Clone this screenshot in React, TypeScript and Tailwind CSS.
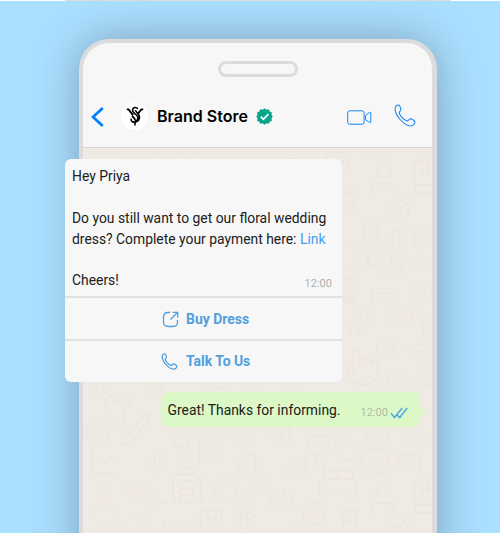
import React from "react";
import {
  User, BookMarked, LifeBuoy, Trash2, Smartphone, MessagesSquare, CreditCard, Clock3, Utensils, Wallet, HatGlasses,
  Pointer, PhoneCall, CupSoda, Square, Shirt, Disc, Slice, ChartLine, Mic, Lamp, Calculator, ShoppingCart,
  Briefcase, Backpack, Badge, AudioLines, ArrowLeft, ChefHat, Flower2, Gamepad2, Martini, Pencil, Gift, Cake,
  Tag, Banknote, Fuel, Smile, Mail, TriangleRight, BedDouble, HardHat, Globe, Sparkles, Ticket, Wifi, Scissors,
  Image, Pin, ToggleLeft, Box,
} from "lucide-react";

type Doodle = [React.ElementType, number, number, number, number];

const doodles: Doodle[] = [
  [BedDouble, 89, 146, 28, 10], [Scissors, 151, 146, 12, 12], [Disc, 174, 148, 26, 26],
  [TriangleRight, 281, 145, 18, 16], [Wallet, 323, 150, 28, 22], [Smile, 361, 132, 28, 25], [Mail, 397, 138, 23, 15],
  [User, 363, 160, 40, 38], [BookMarked, 409, 157, 28, 39], [LifeBuoy, 383, 197, 27, 27],
  [Trash2, 359, 217, 22, 27], [Smartphone, 387, 228, 22, 26], [MessagesSquare, 364, 250, 40, 27],
  [CreditCard, 369, 283, 28, 24], [Clock3, 407, 280, 26, 26], [CreditCard, 386, 304, 28, 24],
  [Utensils, 418, 314, 16, 25], [Wallet, 373, 334, 22, 26], [HatGlasses, 404, 341, 26, 20],
  [Pointer, 343, 344, 37, 44], [PhoneCall, 384, 373, 26, 26], [CupSoda, 338, 183, 22, 31],
  [Square, 338, 243, 21, 26], [Sparkles, 344, 309, 28, 28], [ToggleLeft, 407, 253, 28, 22],
  [Image, 411, 228, 23, 22], [Box, 414, 364, 24, 24], [Flower2, 338, 275, 20, 30],
  [Pin, 92, 381, 16, 18], [Image, 145, 381, 18, 15], [Ticket, 204, 370, 24, 22], [Globe, 240, 370, 22, 22],
  [Shirt, 102, 392, 30, 34], [Disc, 84, 417, 28, 28], [Slice, 118, 408, 34, 42],
  [ChartLine, 88, 444, 31, 32], [Mic, 147, 449, 20, 28], [Lamp, 169, 434, 24, 25],
  [Calculator, 194, 436, 29, 28], [ShoppingCart, 225, 421, 29, 27], [Briefcase, 236, 452, 28, 24],
  [Backpack, 166, 463, 41, 42], [Badge, 211, 475, 28, 27], [AudioLines, 123, 477, 26, 25],
  [ArrowLeft, 143, 489, 32, 27], [ChefHat, 94, 481, 20, 21], [User, 86, 487, 36, 29],
  [BookMarked, 195, 506, 31, 34], [Flower2, 233, 502, 27, 28], [Gamepad2, 99, 519, 28, 22],
  [Martini, 129, 512, 26, 26], [Ticket, 160, 517, 30, 24], [Pencil, 244, 475, 24, 25],
  [Gift, 266, 422, 29, 25], [Cake, 302, 424, 32, 25], [Tag, 332, 435, 28, 28],
  [Banknote, 363, 423, 27, 22], [Fuel, 405, 426, 21, 21], [Smile, 358, 445, 33, 32],
  [Mail, 395, 450, 27, 24], [Gift, 300, 449, 30, 22], [TriangleRight, 278, 452, 28, 28],
  [BedDouble, 315, 464, 45, 35], [User, 362, 478, 41, 38], [BookMarked, 409, 476, 28, 39],
  [HardHat, 264, 484, 33, 28], [Globe, 300, 499, 27, 27], [CupSoda, 333, 499, 31, 33],
  [LifeBuoy, 382, 515, 28, 28], [Wifi, 278, 384, 22, 16], [Box, 374, 380, 18, 14],
  [Square, 222, 414, 28, 16], [Wifi, 287, 520, 24, 24],
];

function Wallpaper() {
  return (
    <svg className="absolute inset-0 h-full w-full text-[#ebe5de]" viewBox="83 148 349 385" preserveAspectRatio="xMinYMin slice">
      {doodles.map(([Icon, x, y, w, h], i) => (
        <Icon key={i} x={x} y={y} width={w} height={h} preserveAspectRatio="none" strokeWidth={0.9} />
      ))}
    </svg>
  );
}

function Handset({ className, weight }: { className: string; weight: number }) {
  return (
    <svg className={className} viewBox="0 0 22 23" fill="none" stroke="currentColor" strokeWidth={weight} strokeLinejoin="round">
      <path d="M1.2 4.2C1.5 2 3.2.8 4.7 1.1C5.8 1.3 6.5 3.8 6.9 5.2C7.3 6.7 5.2 7.4 5.2 8.8C5.4 11.2 9.8 15.9 12.7 16.8C14.4 17.3 15 14.9 16.5 14.8C17.9 14.8 20.8 16.9 20.9 18.1C21 19.7 18.7 21.7 17 21.9C10.4 22.2.4 11.1 1.2 4.2Z" />
    </svg>
  );
}

function Verified() {
  return (
    <svg className="ml-[8px] size-[17px]" viewBox="0 0 24 24">
      <path fill="#06a58a" d="M12 .5l2.7 2.1 3.3-.7 1.4 3.1 3.1 1.4-.7 3.2L23.7 12l-1.9 2.7.7 3.2-3.1 1.4-1.4 3.1-3.3-.7L12 23.7l-2.7-2-3.3.7-1.4-3.1-3.1-1.4.7-3.2L.3 12l1.9-2.4-.7-3.2L4.6 5 6 1.9l3.3.7z" />
      <path d="M6.7 12.2l3.7 3.7 7-7.3" fill="none" stroke="white" strokeWidth="2.5" />
    </svg>
  );
}

function Header() {
  return (
    <div className="flex h-[60px] items-center border-b border-[#d5d3d5] pr-[16px] pl-[8px] text-[#1585f8]">
      <svg className="-mt-px h-[22px] w-[13px] text-[#0080ff]" viewBox="0 0 13 22" fill="none" stroke="currentColor" strokeWidth="2.8">
        <path d="M11.8 2L2 11L11.8 20" />
      </svg>
      <div className="-mt-[3px] ml-[17px] flex size-[27px] items-center justify-center rounded-full bg-white text-black">
        <svg className="h-[20px] w-[18px]" viewBox="0 0 18 20" fill="none" stroke="currentColor" strokeWidth="1.9">
          <path d="M.8 3.4H2.6L7.2 9.4M17.2 3.4H15.4L11.6 8.2" />
          <path d="M11.7 3C10.8.9 6.9 1 6.6 3.7C6.4 6 8 6.7 9.4 8C11.3 9.6 12.4 11 11.8 13C11.3 14.7 9 14.6 9 16.8V19.6M6 10.2C7.6 11.4 9.5 12.6 9 14.6M5.2 12.6C4.8 15 6.3 16.3 9 16.3M9.6 4.2C9.4 6.2 13.6 7.6 13.5 11.2C13.4 13.8 12 15.4 9.6 16" strokeWidth="1.6" />
        </svg>
      </div>
      <span className="-mt-[3px] ml-[9px] font-['Inter'] text-[16px] font-semibold tracking-[0.02px] whitespace-nowrap text-black">Brand Store</span>
      <div className="-mt-[2px]"><Verified /></div>
      <svg className="-mt-px ml-auto h-[15px] w-[25px]" viewBox="0 0 25 15" fill="none" stroke="currentColor" strokeWidth="1">
        <rect x=".7" y=".8" width="16.4" height="13.4" rx="2" />
        <path d="M18.5 5.5L22.5 2.5Q23.8 1.8 23.8 3V12Q23.8 13.2 22.5 12.5L18.5 9.7Z" />
      </svg>
      <Handset className="-mt-[5px] ml-[22px] h-[23px] w-[22px]" weight={1.05} />
    </div>
  );
}

function MessageCard() {
  return (
    <div className="-ml-[18px] flex h-[223px] w-[277px] flex-col overflow-hidden rounded-[6px] bg-[#f7f7f7] text-[#202020]">
      <div className="h-[139px] border-b-2 border-[#e1e1e0] pt-[7px] pr-[10px] pl-[7px] text-[13.88px] leading-[20.8px] whitespace-nowrap">
        <p>Hey Priya</p>
        <p className="mt-[21px]">Do you still want to get our floral wedding</p>
        <p>dress? Complete your payment here: <span className="text-[#45a0f0]">Link</span></p>
        <div className="mt-[21px] flex justify-between">
          <p>Cheers!</p>
          <span className="pt-[4px] text-[11px] text-[#b1b1b1]">12:00</span>
        </div>
      </div>
      <div className="flex h-[43px] items-center border-b-2 border-[#e1e1e0] pt-[2px] pl-[97px] text-[13.95px] font-bold text-[#50a0df]">
        <svg className="mr-[7px] size-[17px]" viewBox="0 0 17 17" fill="none" stroke="currentColor" strokeWidth="1.3">
          <path d="M8 1.5H6Q1.5 1.5 1.5 6V11Q1.5 15.5 6 15.5H11Q15.5 15.5 15.5 11V9M8.5 8.5L15.7 1.3M10.5 1.3H15.7V6.5" />
        </svg>
        Buy Dress
      </div>
      <div className="flex flex-1 items-center pl-[96px] text-[13.9px] font-bold text-[#50a0df]">
        <Handset className="mr-[8px] h-[17px] w-[17px]" weight={1.7} />
        Talk To Us
      </div>
    </div>
  );
}

function Reply() {
  return (
    <div className="mt-[10px] ml-[79px] flex items-center">
      <div className="flex h-[35px] w-[258px] items-center rounded-[6px] bg-[#dcf8c6] pl-[5.5px] text-[13.88px] whitespace-nowrap text-[#1b211a]">
        <span className="pt-[1px]">Great! Thanks for informing.</span>
        <span className="mt-[7px] ml-auto text-[11px] text-[#adbda2]">12:00</span>
        <svg className="mt-[7px] mr-[12px] ml-[2px] h-[12px] w-[18px] text-[#4ba7e6]" viewBox="0 0 18 12" fill="none" stroke="currentColor" strokeWidth="1.5">
          <path d="M1 6.2L4.5 10.5L12.2 1M7.2 8L9.7 10.5L17.2 1" />
        </svg>
      </div>
      <svg className="mt-[5px] h-[10px] w-[7px]" viewBox="0 0 7 10"><path d="M0 0L6.5 5L0 10Z" fill="#dcf8c6" /></svg>
    </div>
  );
}

export default function App() {
  return (
    <div className="h-[533px] w-[500px] overflow-hidden bg-[#abdfff] font-['Roboto',sans-serif]">
      <div className="h-px bg-white px-[65px]"><div className="h-px w-[386px] bg-[#dcdcdc]" /></div>
      <div className="mt-[38px] ml-[79px] h-[600px] w-[358px] rounded-[30px] border-4 border-r-5 border-[#dcdcdd] bg-[#f7f7f7] shadow-[0_0_44px_rgba(0,0,0,0.28)]">
        <div className="flex h-[45px] justify-center pt-[18px] pl-px">
          <div className="h-[16px] w-[80px] rounded-full border-[3px] border-[#dcdcdd]" />
        </div>
        <Header />
        <div className="relative h-[386px] bg-[#efeae4]">
          <Wallpaper />
          <div className="relative pt-[11px]">
            <MessageCard />
            <Reply />
          </div>
        </div>
      </div>
    </div>
  );
}
